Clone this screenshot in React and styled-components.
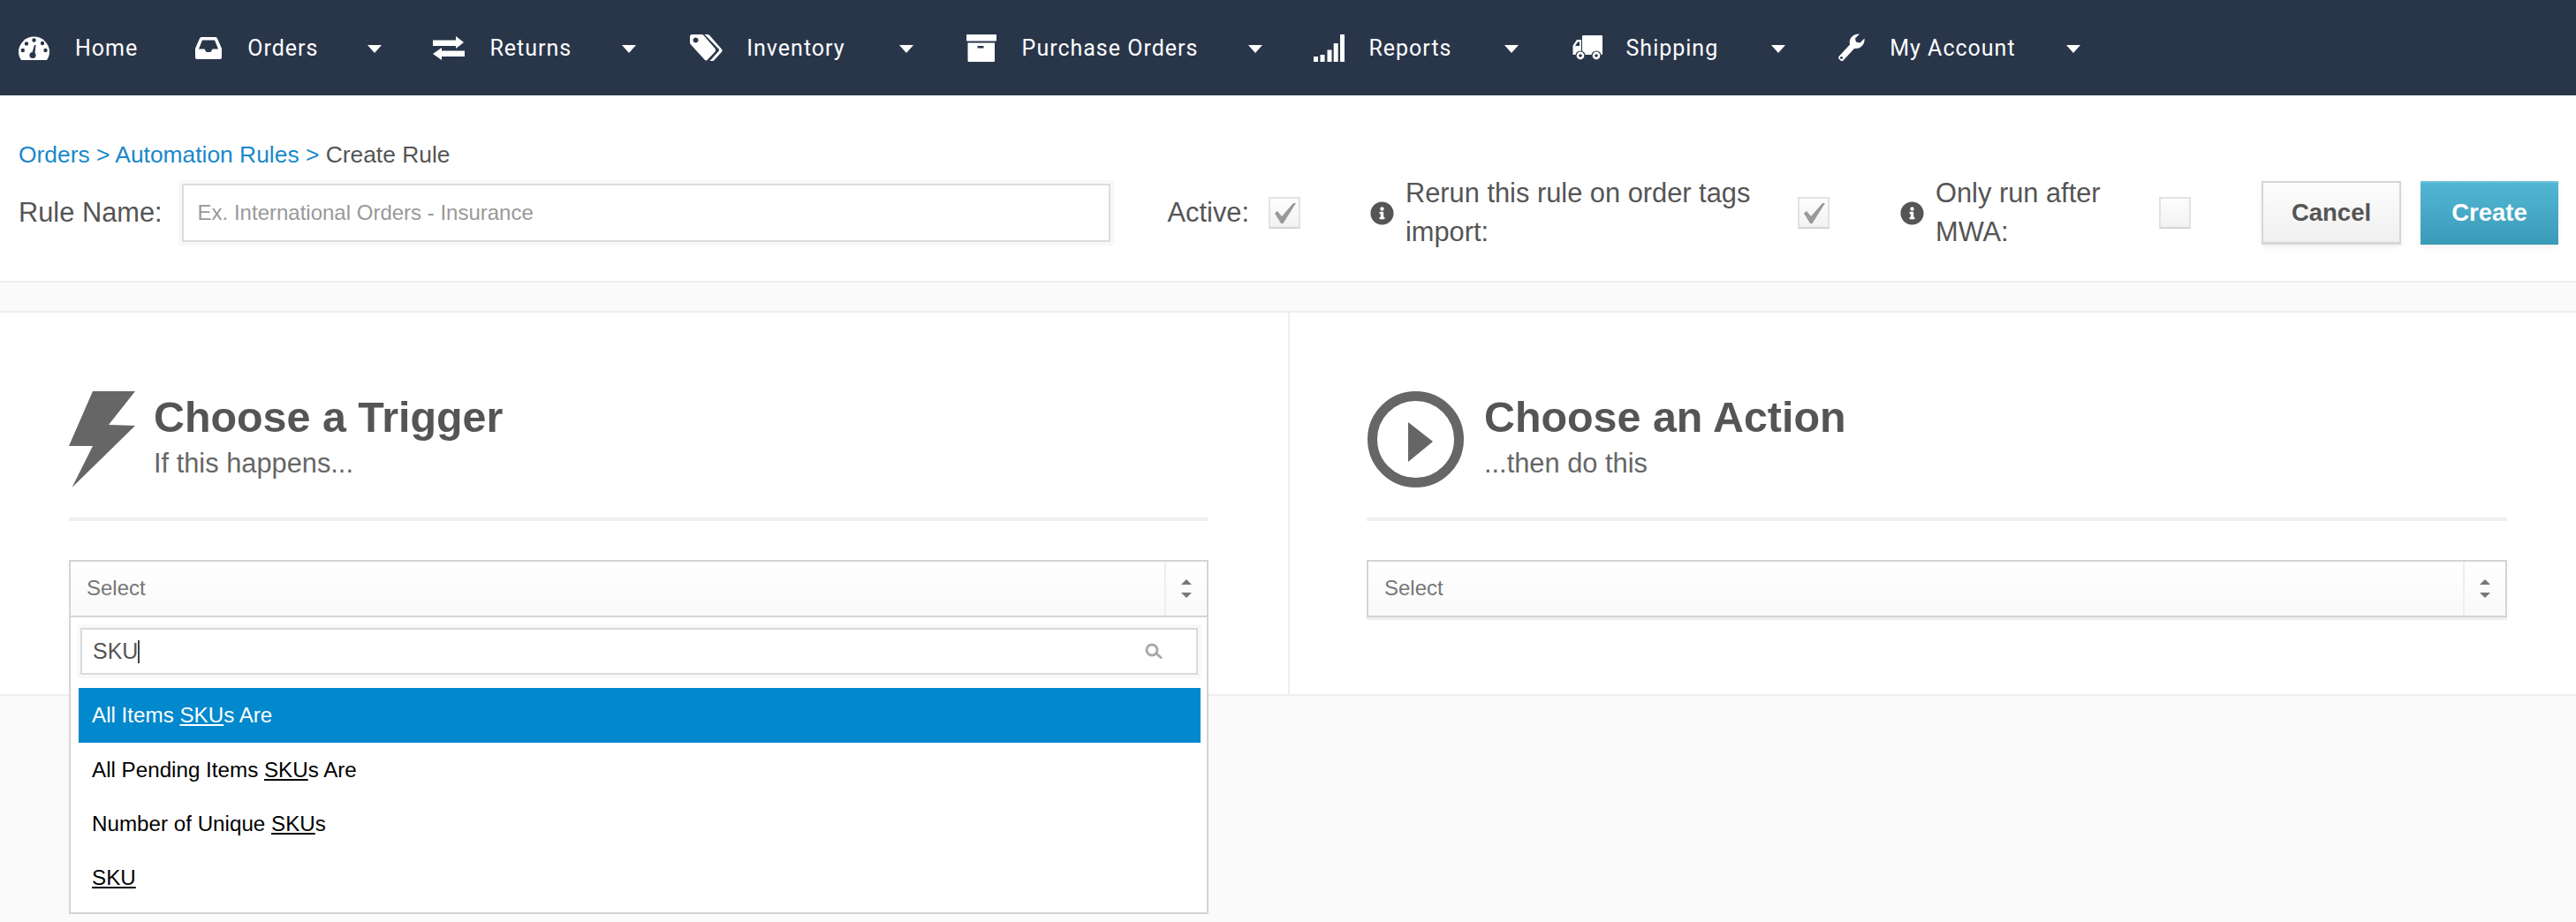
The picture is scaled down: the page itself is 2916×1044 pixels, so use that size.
import React from 'react';
import styled, { createGlobalStyle } from 'styled-components';
import { FaInfoCircle } from 'react-icons/fa';

const NAVY = '#29364a';

const GlobalStyle = createGlobalStyle`
  html, body {
    margin: 0;
    padding: 0;
    background: #fafafa;
  }
  body {
    font-family: "Liberation Sans", Arial, sans-serif;
    color: #555;
    overflow: hidden;
  }
`;

const Page = styled.div`
  width: 2916px;
  height: 1044px;
  overflow: hidden;
`;

/* top nav */
const Nav = styled.nav`
  height: 108px;
  background: ${NAVY};
  display: flex;
  align-items: center;
  padding-left: 21px;
`;

const NavItem = styled.a`
  display: flex;
  align-items: center;
  margin-right: ${(p) => p.$after}px;
  color: #fff;
  font-family: Roboto, sans-serif;
  font-size: 25px;
  font-weight: 400;
  letter-spacing: 1px;
  white-space: nowrap;
`;

const NavIcon = styled.svg`
  display: block;
  fill: #fff;
  flex: none;
  margin-right: ${(p) => p.$gap}px;
`;

const Caret = styled.span`
  width: 0;
  height: 0;
  margin-left: ${(p) => p.$left}px;
  margin-top: 2px;
  border-left: 8px solid transparent;
  border-right: 8px solid transparent;
  border-top: 9px solid #fff;
`;

const Gauge = () => (
  <NavIcon $gap={29} width="35" height="27" viewBox="0 0 35 27">
    <path d="M3 27C1 24 0 21 0 18a17.5 17.5 0 0 1 35 0c0 3-1 6-3 9Z" />
    <g fill={NAVY}>
      <circle cx="9" cy="8.5" r="2.2" />
      <circle cx="17.5" cy="4.5" r="2.2" />
      <circle cx="27" cy="8" r="2.2" />
      <circle cx="4.8" cy="16" r="2.2" />
      <circle cx="30.5" cy="16" r="2.2" />
      <circle cx="16" cy="21.5" r="3.6" />
    </g>
    <path d="M15 20l3-10h1.6l-1.4 11Z" fill={NAVY} />
  </NavIcon>
);

const InboxIcon = () => (
  <NavIcon $gap={29} width="30" height="25" viewBox="0 0 30 25">
    <path
      fillRule="evenodd"
      d="M5 1.5Q5.7 0 7 0h16q1.3 0 2 1.5L30 13v10q0 2-2 2H2q-2 0-2-2V13ZM8 3.5 4 13.5h6.5l2 3.5h5l2-3.5H26L22 3.5Z"
    />
  </NavIcon>
);

const Exchange = () => (
  <NavIcon $gap={28} width="36" height="27" viewBox="0 0 36 27">
    <path d="M0 4.5h26V0l9 7-9 7V11H0Z" />
    <path d="M36 16.500H10V13L0 20l10 7v-4H36Z" />
  </NavIcon>
);

const Tags = () => (
  <NavIcon $gap={27} width="37" height="30" viewBox="0 0 37 30">
    <path
      fillRule="evenodd"
      d="M2.500 0H13q1.500 0 2.500 1l13 15q1.500 1.800 0 3.500L20 28.500q-1.700 1.800-3.500 0L1 11.500Q0 10.500 0 9V2.500Q0 0 2.500 0ZM6.500 3.500a3 3 0 1 0 .01 0Z"
    />
    <path d="M16.500 0H20q1.300 0 2.200 1l13.600 15.500q1.500 1.800 0 3.500L26.500 30H22.500l10-11q1-1.300 0-2.500Z" />
  </NavIcon>
);

const ArchiveIcon = () => (
  <NavIcon $gap={29} width="34" height="31" viewBox="0 0 34 31">
    <rect x="0" y="0" width="34" height="7.500" rx="1" />
    <path
      fillRule="evenodd"
      d="M1.500 9.500h30.500V30q0 1-1 1H2.500q-1 0-1-1ZM12.500 13v2.500h7V13Z"
    />
  </NavIcon>
);

const SignalIcon = () => (
  <NavIcon $gap={27} width="35" height="31" viewBox="0 0 35 31">
    <rect x="0" y="25" width="5" height="6" />
    <rect x="7.500" y="23" width="5" height="8" />
    <rect x="15.500" y="17.500" width="5" height="13.500" />
    <rect x="22.700" y="10" width="5" height="21" />
    <rect x="30" y="0" width="5" height="31" />
  </NavIcon>
);

const Truck = () => (
  <NavIcon $gap={27} width="34" height="28" viewBox="0 0 34 28">
    <path d="M11 1q0-1 1-1h21q1 0 1 1v20q0 1-1 1H11Z" />
    <path
      fillRule="evenodd"
      d="M10 5H5L.5 11.500V22H10ZM8 7.500H6L3 12h5Z"
    />
    <circle cx="9" cy="23" r="5" stroke={NAVY} strokeWidth="1.200" />
    <circle cx="9" cy="23" r="1.800" fill={NAVY} />
    <circle cx="27" cy="23" r="5" stroke={NAVY} strokeWidth="1.200" />
    <circle cx="27" cy="23" r="1.800" fill={NAVY} />
  </NavIcon>
);

const WrenchIcon = () => (
  <NavIcon $gap={27} width="32" height="32" viewBox="0 0 32 32">
    <path d="M1.500 26L14 12.500C12.500 6 17 0 25 .5L20 5.500l1 4 4.500 1 5-5C31.500 12 26 18 19 17L6.500 30.500Q5 32 3.500 30.500l-2-2Q.5 27 1.500 26Z" />
    <circle cx="4.500" cy="27.500" r="1.400" fill={NAVY} />
  </NavIcon>
);

const NAV_ITEMS = [
  { label: 'Home', Icon: Gauge, after: 65 },
  { label: 'Orders', Icon: InboxIcon, caret: 56, after: 58 },
  { label: 'Returns', Icon: Exchange, caret: 57, after: 61 },
  { label: 'Inventory', Icon: Tags, caret: 61, after: 60 },
  { label: 'Purchase Orders', Icon: ArchiveIcon, caret: 57, after: 58 },
  { label: 'Reports', Icon: SignalIcon, caret: 59, after: 61 },
  { label: 'Shipping', Icon: Truck, caret: 60, after: 59 },
  { label: 'My Account', Icon: WrenchIcon, caret: 57, after: 0 },
];

/* rule header */
const RuleHeader = styled.header`
  background: #fff;
  padding: 52px 20px 41px 21px;
`;

const Crumbs = styled.div`
  height: 30px;
  line-height: 30px;
  font-size: 26.4px;
  color: #555;
  margin-bottom: 15px;
`;

const CrumbLink = styled.a`
  color: #1a88c9;
`;

const Toolbar = styled.div`
  display: flex;
  align-items: center;
  height: 72px;
`;

const FieldLabel = styled.label`
  font-size: 30.8px;
  color: #555;
  white-space: nowrap;
  margin-right: ${(p) => p.$gap}px;
`;

const NameInput = styled.div`
  box-sizing: border-box;
  width: 1055px;
  height: 66px;
  margin-right: 65px;
  display: flex;
  align-items: center;
  padding-left: 16px;
  background: #fff;
  border: 2px solid #dcdcdc;
  box-shadow: 0 0 0 4px #f8f8f8;
  color: #999;
  font-size: 24px;
`;

const Check = styled.span`
  box-sizing: border-box;
  flex: none;
  width: 36px;
  height: 36px;
  display: flex;
  align-items: center;
  justify-content: center;
  margin-right: ${(p) => p.$gap}px;
  border: 2px solid #e2e2e2;
  border-bottom-color: #d4d4d4;
  background: linear-gradient(#fdfdfd, #f2f2f2);
`;

const InfoDot = styled(FaInfoCircle)`
  flex: none;
  width: 27px;
  height: 27px;
  color: #555;
  margin-right: 13px;
`;

const WrapLabel = styled.div`
  flex: none;
  width: ${(p) => p.$w}px;
  font-size: 30.8px;
  line-height: 44px;
  color: #555;
`;

const Button = styled.button`
  box-sizing: border-box;
  width: ${(p) => p.$w}px;
  height: 72px;
  flex: none;
  margin-right: ${(p) => p.$gap}px;
  font-family: "Liberation Sans", Arial, sans-serif;
  font-size: 27.5px;
  font-weight: 700;
  padding: 0;
  box-shadow: 0 3px 6px rgba(0, 0, 0, 0.06);
  ${(p) =>
    p.$primary
      ? `
    color: #fff;
    border: 0;
    padding-bottom: 3px;
    border-top: 2px solid #6cc2da;
    background: linear-gradient(#52b6d2, #3a9bb8);
  `
      : `
    color: #555;
    border: 2px solid #d6d6d6;
    border-bottom-width: 3px;
    background: linear-gradient(#fdfdfd, #f0f0f0);
  `}
`;

const Strip = styled.div`
  box-sizing: border-box;
  height: 36px;
  border-top: 2px solid #eee;
  border-bottom: 2px solid #eee;
  background: #fafafa;
`;

/* trigger / action */
const Panels = styled.section`
  display: grid;
  grid-template-columns: 1458px 1fr;
  height: 432px;
  background: #fff;
  border-bottom: 2px solid #eee;
`;

const Column = styled.div`
  padding: 89px ${(p) => p.$right}px 0 ${(p) => p.$left}px;
  ${(p) => p.$divided && 'border-left: 2px solid #eee;'}
`;

const Heading = styled.div`
  display: flex;
  align-items: flex-start;
  height: 109px;
  gap: ${(p) => p.$gap}px;
`;

const Titles = styled.div`
  padding-top: 1px;
`;

const Title = styled.h2`
  margin: 0;
  font-size: 48.4px;
  line-height: 56px;
  font-weight: 700;
  color: #555;
`;

const Subtitle = styled.div`
  font-size: 30.8px;
  line-height: 36px;
  margin-top: 7px;
  color: #666;
`;

const Rule = styled.hr`
  height: 4px;
  border: 0;
  margin: 34px 0 44px;
  background: #efefef;
`;

const SelectBox = styled.div`
  position: relative;
  box-sizing: border-box;
  height: 65px;
  display: flex;
  align-items: stretch;
  border: 2px solid #d4d4d4;
  background: linear-gradient(#fff, #f9f9f9);
  ${(p) => p.$raised && 'box-shadow: 0 3px 0 #efefef;'}
`;

const SelectValue = styled.div`
  flex: 1;
  display: flex;
  align-items: center;
  padding: 0 0 2px 18px;
  font-size: 24px;
  color: #777;
`;

const SelectArrows = styled.div`
  width: 46px;
  border-left: 2px solid #eee;
  display: flex;
  flex-direction: column;
  align-items: center;
  justify-content: center;
  gap: 9px;

  &::before,
  &::after {
    content: '';
    width: 0;
    height: 0;
    border-left: 6px solid transparent;
    border-right: 6px solid transparent;
  }
  &::before {
    border-bottom: 6px solid #777;
  }
  &::after {
    border-top: 6px solid #777;
  }
`;

const Menu = styled.div`
  position: absolute;
  top: calc(100% + 2px);
  left: -2px;
  right: -2px;
  box-sizing: border-box;
  height: 336px;
  padding: 7px 7px 0 9px;
  background: #fff;
  border: 2px solid #d4d4d4;
  border-top: 0;
  z-index: 5;
`;

const SearchWrap = styled.div`
  box-sizing: border-box;
  height: 53px;
  margin: 5px 3px 15px 2px;
  display: flex;
  align-items: center;
  justify-content: space-between;
  padding: 0 36px 0 12px;
  border: 2px solid #d9d9d9;
  box-shadow: 0 0 0 4px #f8f8f8;
  font-size: 25px;
  color: #555;
`;

const TypedText = styled.span`
  display: inline-flex;
  align-items: center;
`;

const TextCursor = styled.span`
  display: inline-block;
  width: 2px;
  height: 26px;
  background: #444;
`;

const Option = styled.div`
  height: ${(p) => (p.$active ? 62 : 61)}px;
  display: flex;
  align-items: center;
  white-space: pre;
  padding-left: 15px;
  font-size: 24.2px;
  color: ${(p) => (p.$active ? '#fff' : '#000')};
  background: ${(p) => (p.$active ? '#0288cc' : 'transparent')};
`;

const Tick = () => (
  <svg width="28" height="24" viewBox="0 0 28 24">
    <path d="M3 12.500l3-2.500 5 6L24 1h3L12.500 24H10Z" fill="#999" />
  </svg>
);

const Bolt = () => (
  <svg width="75" height="109" viewBox="0 0 75 109" style={{ flex: 'none' }}>
    <path d="M27 0H75L45 38l30 1L3.500 109 27 62H0Z" fill="#666" />
  </svg>
);

const PlayRing = () => (
  <svg width="111" height="109" viewBox="0 0 111 109" style={{ flex: 'none' }}>
    <circle cx="55.500" cy="54.500" r="49" fill="none" stroke="#666" strokeWidth="11" />
    <path d="M47 35L75 57 47 80Z" fill="#666" />
  </svg>
);

const SearchGlass = () => (
  <svg width="22" height="19" viewBox="0 0 22 19">
    <circle cx="8" cy="8" r="6" fill="none" stroke="#aaa" strokeWidth="3" />
    <path d="M13 12l6 5.500" stroke="#aaa" strokeWidth="3" />
  </svg>
);

const App = () => {
  return (
    <Page>
      <GlobalStyle />
      <Nav>
        {NAV_ITEMS.map(({ label, Icon, caret, after }) => (
          <NavItem key={label} $after={after}>
            <Icon />
            {label}
            {caret && <Caret $left={caret} />}
          </NavItem>
        ))}
      </Nav>

      <RuleHeader>
        <Crumbs>
          <CrumbLink>Orders &gt; Automation Rules &gt;</CrumbLink> Create Rule
        </Crumbs>
        <Toolbar>
          <FieldLabel $gap={22}>Rule Name:</FieldLabel>
          <NameInput>Ex. International Orders - Insurance</NameInput>
          <FieldLabel $gap={22}>Active:</FieldLabel>
          <Check $gap={79}>
            <Tick />
          </Check>
          <InfoDot />
          <WrapLabel $w={444}>Rerun this rule on order tags import:</WrapLabel>
          <Check $gap={80}>
            <Tick />
          </Check>
          <InfoDot />
          <WrapLabel $w={253}>Only run after MWA:</WrapLabel>
          <Check $gap={80} />
          <Button $w={158} $gap={22}>
            Cancel
          </Button>
          <Button $w={156} $gap={0} $primary>
            Create
          </Button>
        </Toolbar>
      </RuleHeader>

      <Strip />

      <Panels>
        <Column $left={78} $right={90}>
          <Heading $gap={21}>
            <Bolt />
            <Titles>
              <Title>Choose a Trigger</Title>
              <Subtitle>If this happens...</Subtitle>
            </Titles>
          </Heading>
          <Rule />
          <SelectBox>
            <SelectValue>Select</SelectValue>
            <SelectArrows />
            <Menu>
              <SearchWrap>
                <TypedText>
                  SKU
                  <TextCursor />
                </TypedText>
                <SearchGlass />
              </SearchWrap>
              <Option $active>
                All Items <u>SKU</u>s Are
              </Option>
              <Option>
                All Pending Items <u>SKU</u>s Are
              </Option>
              <Option>
                Number of Unique <u>SKU</u>s
              </Option>
              <Option>
                <u>SKU</u>
              </Option>
            </Menu>
          </SelectBox>
        </Column>
        <Column $divided $left={87} $right={78}>
          <Heading $gap={22}>
            <PlayRing />
            <Titles>
              <Title>Choose an Action</Title>
              <Subtitle>...then do this</Subtitle>
            </Titles>
          </Heading>
          <Rule />
          <SelectBox $raised>
            <SelectValue>Select</SelectValue>
            <SelectArrows />
          </SelectBox>
        </Column>
      </Panels>
    </Page>
  );
};

export default App;
